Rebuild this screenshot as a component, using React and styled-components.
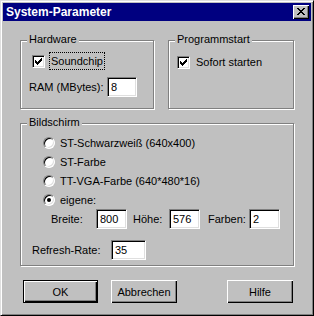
import React from "react";
import styled, { createGlobalStyle } from "styled-components";

const Global = createGlobalStyle`
  html, body { margin: 0; padding: 0; background: #c0c0c0; }
  * { box-sizing: border-box; }
`;

const Window = styled.div`
  width: 314px;
  height: 316px;
  background: #c0c0c0;
  border: 1px solid;
  border-color: #dfdfdf #000 #000 #dfdfdf;
  box-shadow: inset 1px 1px #fff, inset -1px -1px #808080;
  padding: 2px;
  display: flex;
  flex-direction: column;
  font-family: "Liberation Sans", Arial, sans-serif;
  font-size: 11px;
  color: #000;
`;

const TitleBar = styled.div`
  height: 18px;
  background: #000080;
  display: flex;
  align-items: center;
  justify-content: space-between;
  padding: 0 2px 0 3px;
`;

const Title = styled.span`
  color: #fff;
  font-weight: bold;
  font-size: 12px;
`;

const CloseButton = styled.div`
  width: 16px;
  height: 14px;
  background: #c0c0c0;
  box-shadow: inset 1px 1px #fff, inset -1px -1px #000, inset -2px -2px #808080;
  display: flex;
  align-items: center;
  justify-content: center;
  padding-bottom: 1px;
`;

const Body = styled.div`
  display: flex;
  flex-direction: column;
  padding: 19px 0 0 17px;
`;

const TopRow = styled.div`
  display: flex;
  gap: 14px;
`;

const Group = styled.div`
  position: relative;
  width: ${(p) => p.$w}px;
  height: ${(p) => p.$h}px;
  margin-top: ${(p) => p.$mt || 0}px;
  border: 1px solid #808080;
  box-shadow: inset 1px 1px #fff, 1px 1px 0 #fff;
  display: flex;
  flex-direction: column;
`;

const Legend = styled.span`
  position: absolute;
  top: -8px;
  left: 6px;
  padding: 0 2px;
  line-height: 13px;
  background: #c0c0c0;
`;

const Row = styled.div`
  display: flex;
  align-items: center;
  height: ${(p) => p.$h || 18}px;
  margin-top: ${(p) => p.$mt || 0}px;
  margin-left: ${(p) => p.$ml || 0}px;
`;

const CheckBox = styled.div`
  width: 13px;
  height: 13px;
  background: #fff;
  border: 1px solid;
  border-color: #808080 #fff #fff #808080;
  box-shadow: inset 1px 1px #000, inset -1px -1px #dfdfdf;
  display: flex;
  align-items: center;
  justify-content: center;
`;

const FocusText = styled.span`
  margin-left: 4px;
  padding: 0 1px;
  height: 18px;
  line-height: 16px;
  border: 1px ${(p) => (p.$focus ? "dotted #000" : "solid transparent")};
`;

const Radio = styled.div`
  width: 12px;
  height: 12px;
  border-radius: 50%;
  background: #fff;
  border: 1px solid;
  border-color: #808080 #fff #fff #808080;
  box-shadow: inset 1px 1px #000, inset -1px -1px #dfdfdf;
  display: flex;
  align-items: center;
  justify-content: center;
`;

const Dot = styled.div`
  width: 4px;
  height: 4px;
  border-radius: 50%;
  background: #000;
`;

const RadioText = styled.span`
  margin-left: 5px;
`;

const Label = styled.span`
  width: ${(p) => p.$w}px;
  margin-left: ${(p) => p.$ml || 0}px;
  flex-shrink: 0;
  white-space: nowrap;
`;

const Field = styled.div`
  width: ${(p) => p.$w}px;
  height: 20px;
  background: #fff;
  border: 1px solid;
  border-color: #808080 #fff #fff #808080;
  box-shadow: inset 1px 1px #000, inset -1px -1px #dfdfdf;
  padding-left: 3px;
  line-height: 18px;
  flex-shrink: 0;
`;

const ButtonRow = styled.div`
  display: flex;
  margin-top: 14px;
  padding-left: 3px;
`;

const Button = styled.div`
  width: ${(p) => p.$w}px;
  height: 23px;
  margin-left: ${(p) => p.$ml || 0}px;
  display: flex;
  align-items: center;
  justify-content: center;
  background: #c0c0c0;
  border: ${(p) => (p.$default ? "1px solid #000" : "none")};
  box-shadow: inset 1px 1px #fff, inset -1px -1px #000, inset -2px -2px #808080;
`;

const CloseGlyph = () => (
  <svg width="8" height="7" viewBox="0 0 8 7" shapeRendering="crispEdges">
    <path
      d="M0 0h2v1h-2zM6 0h2v1h-2zM1 1h2v1h-2zM5 1h2v1h-2zM2 2h4v1h-4zM3 3h2v1h-2zM2 4h4v1h-4zM1 5h2v1h-2zM5 5h2v1h-2zM0 6h2v1h-2zM6 6h2v1h-2z"
      fill="#000"
    />
  </svg>
);

const CheckGlyph = () => (
  <svg width="7" height="7" viewBox="0 0 7 7" shapeRendering="crispEdges">
    <path
      d="M6 0h1v1h-1zM5 1h2v1h-2zM0 2h1v1h-1zM4 2h3v1h-3zM0 3h2v1h-2zM3 3h3v1h-3zM0 4h5v1h-5zM1 5h3v1h-3zM2 6h1v1h-1z"
      fill="#000"
    />
  </svg>
);

const Check = ({ label, focus }) => (
  <>
    <CheckBox>
      <CheckGlyph />
    </CheckBox>
    <FocusText $focus={focus}>{label}</FocusText>
  </>
);

const RadioItem = ({ label, checked, mt }) => (
  <Row $mt={mt} $ml={22}>
    <Radio>{checked && <Dot />}</Radio>
    <RadioText>{label}</RadioText>
  </Row>
);

export default function App() {
  return (
    <>
      <Global />
      <Window>
        <TitleBar>
          <Title>System-Parameter</Title>
          <CloseButton>
            <CloseGlyph />
          </CloseButton>
        </TitleBar>
        <Body>
          <TopRow>
            <Group $w={134} $h={69}>
              <Legend>Hardware</Legend>
              <Row $mt={11} $ml={11}>
                <Check label="Soundchip" focus />
              </Row>
              <Row $h={20} $mt={7} $ml={8}>
                <Label $w={78}>RAM (MBytes):</Label>
                <Field $w={30}>8</Field>
              </Row>
            </Group>
            <Group $w={126} $h={69}>
              <Legend>Programmstart</Legend>
              <Row $mt={12} $ml={8}>
                <Check label="Sofort starten" />
              </Row>
            </Group>
          </TopRow>
          <Group $w={274} $h={143} $mt={14}>
            <Legend>Bildschirm</Legend>
            <RadioItem mt={10} label="ST-Schwarzweiß (640x400)" />
            <RadioItem mt={1} label="ST-Farbe" />
            <RadioItem mt={1} label="TT-VGA-Farbe (640*480*16)" />
            <RadioItem mt={1} label="eigene:" checked />
            <Row $h={20} $ml={30}>
              <Label $w={45}>Breite:</Label>
              <Field $w={31}>800</Field>
              <Label $w={36} $ml={6}>Höhe:</Label>
              <Field $w={31}>576</Field>
              <Label $w={41} $ml={8}>Farben:</Label>
              <Field $w={31}>2</Field>
            </Row>
            <Row $h={20} $mt={11} $ml={11}>
              <Label $w={79}>Refresh-Rate:</Label>
              <Field $w={35}>35</Field>
            </Row>
          </Group>
          <ButtonRow>
            <Button $w={75} $default>OK</Button>
            <Button $w={66} $ml={13}>Abbrechen</Button>
            <Button $w={66} $ml={50}>Hilfe</Button>
          </ButtonRow>
        </Body>
      </Window>
    </>
  );
}
